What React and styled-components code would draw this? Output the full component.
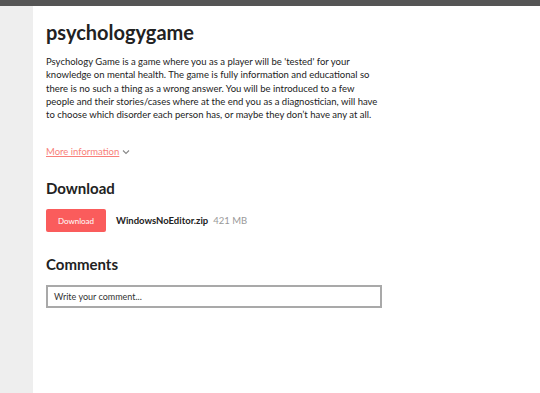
import React from "react"
import styled, { createGlobalStyle } from "styled-components"

const GlobalStyle = createGlobalStyle`
  html, body {
    margin: 0;
    padding: 0;
    background: #eeeeee;
    font-family: Lato, "Open Sans", sans-serif;
  }
`

const Page = styled.div`
  width: 540px;
  height: 393px;
  display: flex;
  flex-direction: column;
  overflow: hidden;
`

const TopBar = styled.div`
  height: 6px;
  background: #555555;
  flex-shrink: 0;
`

const Body = styled.div`
  flex: 1;
  display: flex;
`

const SideGutter = styled.div`
  width: 33px;
  background: #eeeeee;
  flex-shrink: 0;
`

const Content = styled.main`
  flex: 1;
  background: #ffffff;
  padding: 13px 13px 0 13px;
  color: #222222;
`

const Title = styled.h1`
  margin: 0;
  font-size: 20px;
  font-weight: 700;
  line-height: 26px;
  color: #222222;
`

const Description = styled.p`
  margin: 10px 0 0 0;
  width: 350px;
  font-size: 9.5px;
  line-height: 13.3px;
  color: #222222;
`

const MoreLink = styled.a`
  display: inline-flex;
  align-items: center;
  gap: 3px;
  margin-top: 25px;
  font-size: 9.5px;
  color: #f87f7a;
  text-decoration: underline;
  cursor: pointer;

  svg {
    color: #888888;
  }
`

const SectionTitle = styled.h2`
  margin: ${(p) => p.$top || "20px"} 0 0 0;
  font-size: 15px;
  font-weight: 700;
  line-height: 20px;
  color: #222222;
`

const DownloadRow = styled.div`
  display: flex;
  align-items: center;
  gap: 10px;
  margin-top: 11px;
`

const DownloadButton = styled.button`
  width: 60px;
  height: 23px;
  border: none;
  border-radius: 2px;
  background: #fa5c5c;
  color: #ffffff;
  font-family: inherit;
  font-size: 8px;
  padding: 0;
  cursor: pointer;
`

const FileName = styled.strong`
  font-size: 9.5px;
  font-weight: 700;
  color: #222222;
`

const FileSize = styled.span`
  font-size: 9.5px;
  color: #999999;
  margin-left: -5px;
`

const CommentBox = styled.div`
  box-sizing: border-box;
  margin-top: 11px;
  width: 336px;
  height: 23px;
  border: 2px solid #a9a9a9;
  display: flex;
  align-items: center;
  padding: 0 6px;
  font-size: 9px;
  color: #333333;
`

const Chevron = () => (
  <svg width="8" height="6" viewBox="0 0 8 6" fill="none">
    <path d="M1 1.5 L4 4.5 L7 1.5" stroke="currentColor" strokeWidth="1.1" />
  </svg>
)

export default function App() {
  return (
    <Page>
      <GlobalStyle />
      <TopBar />
      <Body>
        <SideGutter />
        <Content>
          <Title>psychologygame</Title>
          <Description>
            Psychology Game is a game where you as a player will be 'tested' for your<br />
            knowledge on mental health. The game is fully information and educational so<br />
            there is no such a thing as a wrong answer. You will be introduced to a few<br />
            people and their stories/cases where at the end you as a diagnostician, will have<br />
            to choose which disorder each person has, or maybe they don’t have any at all.
          </Description>
          <MoreLink>
            More information <Chevron />
          </MoreLink>
          <SectionTitle>Download</SectionTitle>
          <DownloadRow>
            <DownloadButton>Download</DownloadButton>
            <FileName>WindowsNoEditor.zip</FileName>
            <FileSize>421 MB</FileSize>
          </DownloadRow>
          <SectionTitle $top="22px">Comments</SectionTitle>
          <CommentBox>Write your comment...</CommentBox>
        </Content>
      </Body>
    </Page>
  )
}
